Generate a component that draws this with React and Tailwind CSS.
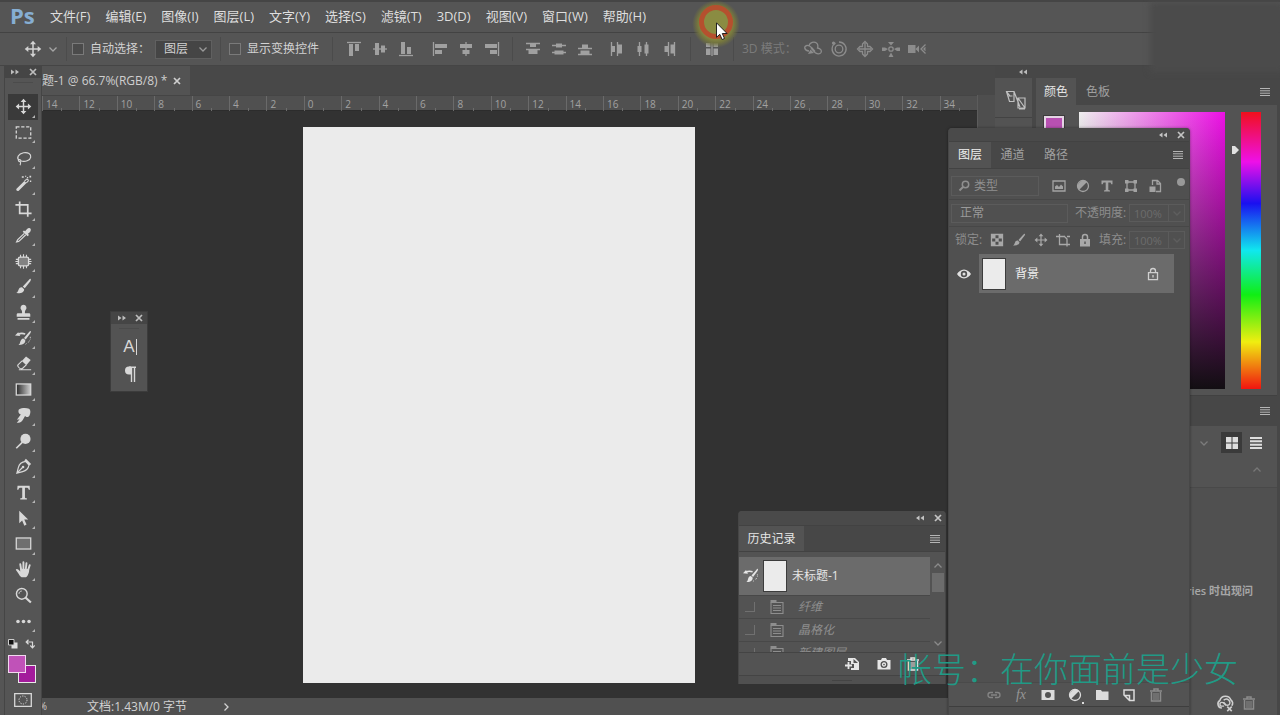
import React from "react";

function Icon({ className = "size-5", box = 20, children }) {
  return (
    <svg viewBox={`0 0 ${box} ${box}`} className={`${className} shrink-0`} fill="none" stroke="currentColor" strokeWidth="1.3" aria-hidden="true">
      {children}
    </svg>
  );
}

const solid = { fill: "currentColor", stroke: "none" };

const glyphs = {
  move: (
    <g>
      <path d="M10 3v14M3 10h14" strokeWidth="1.7" />
      <path {...solid} d="M10 .8l3.400 4H6.600zM10 19.200l3.400-4H6.600zM.8 10l4-3.400v6.800zM19.200 10l-4-3.400v6.800z" />
    </g>
  ),
  marquee: <rect x="1.500" y="3.500" width="17" height="13" strokeDasharray="3.800 2" strokeWidth="1.500" />,
  lasso: (
    <g>
      <path d="M5 12.300C1.200 9 4 4.500 10 3.200c5.500-.9 9 1.400 8.500 5.100-.7 4-6.500 6-11.500 4.600" strokeWidth="1.400" />
      <path d="M6.500 11.500c-1.600-.8-3 .4-2.400 1.500.6 1 2.600.7 2.700-.4.1-.8-.8-1-1.200-.6M6 13.500c1 1 .8 2.500 0 4.500" />
    </g>
  ),
  wand: (
    <g>
      <path {...solid} d="M1.800 16.200L11 7l2.500 2.500-9.100 8.900c-1.600 1.200-3.800-.7-2.600-2.200z" />
      <path d="M11.200 7.300l2.200-2.100c1-1 3 .9 2 1.900L13.300 9.200" />
      <path {...solid} d="M8 1.500h2.300v1.800H8zM14 2.300h1.500v1.500H14zM17 .8h2v2h-2zM17.500 6.500h1.600v1.600h-1.600zM11.800 .8h1.400v1.400h-1.400z" />
    </g>
  ),
  crop: <path d="M5.500 .5v14h9.500M.5 4.500h14.500v14M15 14.500H19.500" strokeWidth="2" />,
  dropper: (
    <g>
      <path d="M11 7.500L3.500 14.500c-.8.900-1 2-1.500 3 1.200-.2 2.700-.6 3.500-1.500L12.700 9.200" strokeWidth="1.500" />
      <path {...solid} d="M9 5.500l1.500-1.500 1.500 1c1-1.500 3-4 5-3.700 1.800.3 2.200 2.500 1.100 4-.7 1-1.800 1.900-2.900 2.700l1.200 1.400-1.500 1.500z" />
    </g>
  ),
  patch: (
    <g>
      <rect x="4" y="4.800" width="12" height="10.400" rx="2" fill="currentColor" fillOpacity=".35" strokeWidth="1.600" />
      <path d="M6.500 2V5M10 1.500v3.500M13.500 2V5M6.500 15v3M10 15v3.500M13.500 15v3M1 7.500H4M.5 10h3.500M1 12.500H4M16 7.500h3M16 10h3.500M16 12.500h3" strokeWidth="1.300" />
    </g>
  ),
  brush: (
    <g>
      <path {...solid} d="M18.500 1.200c.5.500.1 1.600-.7 2.900l-6.300 8-2.300-2.200 7.100-7.600c1-1 1.700-1.600 2.200-1.100z" />
      <path {...solid} d="M8.300 10.800l2.400 2.300c.2 3.300-3 5.200-9.400 4.600 1.900-1 2.300-2.600 3-4.300.7-1.900 2.300-2.900 4-2.600z" />
    </g>
  ),
  stamp: <path {...solid} d="M10 1a3.600 3.600 0 0 1 2.300 6.300c-.6.800-.7 1.900-.6 3.700H16.500c1 0 1.500.7 1.500 1.500V15H2v-2.500c0-.8.5-1.500 1.500-1.500h4.800c.1-1.800 0-2.900-.6-3.700A3.600 3.600 0 0 1 10 1zM3 16.500h14V18.500H3z" />,
  history: (
    <g>
      <path {...solid} d="M18.500 1.200c.5.500.1 1.600-.6 2.800l-5.300 7.200-2-1.800 6-7c.8-.9 1.500-1.600 1.900-1.200zM9.800 9.900l2.200 2c.6 3.600-2.500 6-7.900 5.600 1.700-.9 1.600-2.200 2.200-3.900.6-2.200 1.800-3.600 3.500-3.700zM0 6.500l3.800-4 2.400 4.700z" />
      <path d="M3.500 5.300c2.200-1.300 5.500-1.500 8.500-.6" strokeWidth="2" />
      <path d="M18 8v3M17 12.500l-1.500 2.500M13.500 16l-1.800 1.300" strokeDasharray="1.300 1" strokeWidth="1.100" />
    </g>
  ),
  eraser: (
    <g>
      <path {...solid} d="M8 7l5-5.200 5.500 4-5.200 6.200z" />
      <path d="M8.300 7L3.500 11.700c-1 1.300.5 2.700 1.800 3.700 1.400 1 2.700 1 3.700.2l4.300-4M4.500 17.300h14.500" strokeWidth="1.300" />
    </g>
  ),
  gradient: (
    <g>
      <defs>
        <linearGradient id="toolFade">
          <stop offset="0" stopColor="#2b2b2b" />
          <stop offset="1" stopColor="#d0d0d0" />
        </linearGradient>
      </defs>
      <rect x="1.500" y="3.500" width="17" height="13" fill="url(#toolFade)" strokeWidth="1.500" />
    </g>
  ),
  smudge: <path {...solid} d="M4.500 3c3.300-2.200 8.700-2.200 12-1 1.900 1 2 4.400.9 7-.6 2.200-2.400 3.300-4 2.700L11.800 10.500 9.300 15c-1.100 2.200-3.400 4.300-7.300 3.200 1.700-1.100 2.800-2.500 3.300-4.300l-2 1.300c-1.100-.7-.2-1.500.7-2.600L6.800 8.700C4.200 8.300 3.300 5.500 4.500 3z" />,
  dodge: (
    <g>
      <circle cx="12.300" cy="7" r="6" {...solid} />
      <path d="M8.500 11L1.500 18" strokeWidth="1.900" />
    </g>
  ),
  pen: (
    <g>
      <path d="M12.500 4C9 4.500 5 6.700 4 11L2.200 17.800 9 16c4.300-1 6.800-3.700 7.500-7.800zM2.800 17.200l6-6" strokeWidth="1.400" />
      <circle cx="9.500" cy="10.500" r="1.500" {...solid} />
      <path {...solid} d="M12.800 1l6.200 6.200-2 1.700-6-6z" />
    </g>
  ),
  type: <path {...solid} d="M3 2.200h14.200l.4 4.600h-1.400c-.4-1.900-1-2.500-2.700-2.500h-1.800v10.900c0 1.200.5 1.600 2.300 1.700v1.200H6.200v-1.200c1.800-.1 2.300-.5 2.300-1.700V4.300H6.700c-1.700 0-2.300.6-2.700 2.500H2.600z" />,
  pointer: <path {...solid} d="M5 1l10.500 10.300h-4.600l2.700 5.900-2.600 1.200-2.600-6L5 15.500z" />,
  shape: <rect x="1.500" y="3.500" width="17" height="13" fill="currentColor" fillOpacity=".2" strokeWidth="1.500" />,
  hand: (
    <g>
      <path d="M7.200 10L6.200 3.800M9.900 9V1.500M12.700 9.500l.8-7M15.300 11l2-6" strokeWidth="2.200" strokeLinecap="round" />
      <path {...solid} d="M6 9l10.500.5c.4 2.200 0 4.500-1 6-.8 1.900-1.700 3.500-2.800 3.500H7.700c-1.600-.7-3-3.400-4.300-5.300L.9 10.200c.6-1.500 2.300-1 3.300.2l2 2z" />
    </g>
  ),
  zoom: (
    <g>
      <circle cx="8" cy="8" r="6.300" strokeWidth="1.700" />
      <path d="M12.300 12.300l6.400 6" strokeWidth="2.600" />
      <path d="M4.700 8c0-1.800 1.500-3.300 3.300-3.300" strokeWidth="1.100" />
    </g>
  ),
  dots: (
    <g {...solid}>
      <circle cx="3.500" cy="10" r="2.100" />
      <circle cx="10" cy="10" r="2.100" />
      <circle cx="16.500" cy="10" r="2.100" />
    </g>
  ),
};

const tools = [
  ["move", "移动工具"], ["marquee", "矩形选框工具"], ["lasso", "套索工具"], ["wand", "魔棒工具"],
  ["crop", "裁剪工具"], ["dropper", "吸管工具"], ["patch", "修补工具"], ["brush", "画笔工具"],
  ["stamp", "仿制图章工具"], ["history", "历史记录画笔"], ["eraser", "橡皮擦工具"], ["gradient", "渐变工具"],
  ["smudge", "涂抹工具"], ["dodge", "减淡工具"], ["pen", "钢笔工具"], ["type", "文字工具"],
  ["pointer", "路径选择工具"], ["shape", "矩形工具"], ["hand", "抓手工具"], ["zoom", "缩放工具"], ["dots", "编辑工具栏"],
];

const menus = ["文件(F)", "编辑(E)", "图像(I)", "图层(L)", "文字(Y)", "选择(S)", "滤镜(T)", "3D(D)", "视图(V)", "窗口(W)", "帮助(H)"];

/* Align and distribute glyphs on a 16px grid */
const alignTop = <g><path d="M1 1.500h14" /><path {...solid} d="M3 3h4V15H3zM9 3h4V10H9z" /></g>;
const alignMid = <g><path d="M1 8h14" /><path {...solid} d="M3 2h4v12H3zM9 4.500h4v7H9z" /></g>;
const alignBottom = <g><path d="M1 14.500h14" /><path {...solid} d="M3 1h4v12H3zM9 6h4v7H9z" /></g>;
const turn = (node) => <g transform="matrix(0 1 1 0 0 0)">{node}</g>;
const distTop = <g><path d="M1 2.500h14M1 8.500h14" /><path {...solid} d="M5 2.500h6v3.500H5zM3.500 8.500h9V13h-9z" /></g>;
const distMid = <g><path d="M1 4.500h14M1 11.500h14" /><path {...solid} d="M5 2.500h6v4H5zM3.500 9.500h9v4h-9z" /></g>;
const distBottom = <g><path d="M1 7.500h14M1 13.500h14" /><path {...solid} d="M5 3.500h6v4H5zM3.500 9.500h9v4h-9z" /></g>;

const alignGroups = [
  ["mr-2", [["顶对齐", alignTop], ["垂直居中对齐", alignMid], ["底对齐", alignBottom]]],
  ["", [["左对齐", turn(alignTop)], ["水平居中对齐", turn(alignMid)], ["右对齐", turn(alignBottom)]]],
];
const distGroups = [
  ["mr-1.5", [["按顶分布", distTop], ["垂直居中分布", distMid], ["按底分布", distBottom]]],
  ["", [["按左分布", turn(distTop)], ["水平居中分布", turn(distMid)], ["按右分布", turn(distBottom)]]],
];

const modes3d = [
  ["旋转 3D 对象", <g><path d="M5 11C0 10.500-.5 6 3 5.500c2-.3 3.500 1 5 2.500l3 3.500M5 5.500C6 2.500 10 1 12.500 3c2 1.600 1.500 3.500 1 5 3 .5 4.500 2.500 3.500 4.500-1.200 2.200-4.500 1.500-6 0L7 8" /><path {...solid} d="M4 14l2.500-4.500L10 13z" /></g>],
  ["滚动 3D 对象", <g><path d="M5.500 3A7 7 0 1 0 9 2" /><circle cx="9" cy="9" r="3.800" /><circle cx="3.500" cy="3" r="1.600" {...solid} /></g>],
  ["拖动 3D 对象", <g><path d="M9 1.500L6.500 4v2.500H4L1.500 9 4 11.500h2.500V14L9 16.500l2.500-2.500v-2.500H14L16.500 9 14 6.500h-2.500V4zM9 3v12M3 9h12" /></g>],
  ["滑动 3D 对象", <g><path {...solid} d="M9 5.500L6 2h6zM0 7.500h3L6 9l-3 2H0zM18 7.500h-3L12 9l3 2h3zM6.500 17L9 12.500l2.500 4.500z" /><circle cx="9" cy="9" r="2.200" /></g>],
  ["缩放 3D 对象", <g><path {...solid} d="M0 5h7.500v8H0zM7.500 9L11 5.500v7z" /><path d="M17.500 4.500L13 9l4.500 4.500M17.500 7.500L16 9l1.500 1.500" /></g>],
];

function GlyphGroup({ className, items }) {
  return (
    <div className={`flex ${className}`}>
      {items.map(([label, node]) => (
        <button key={label} aria-label={label} className="flex w-[26px] justify-center">
          <Icon className="size-4" box={16}>{node}</Icon>
        </button>
      ))}
    </div>
  );
}

const Divider = ({ className = "" }) => <span className={`h-6 w-px bg-[#4b4b4b] ${className}`} />;

function Chevron({ className = "" }) {
  return (
    <svg viewBox="0 0 10 10" className={`size-2.5 shrink-0 ${className}`} fill="none" stroke="currentColor" strokeWidth="1.300" aria-hidden="true">
      <path d="M1.500 3.500L5 7l3.500-3.500" />
    </svg>
  );
}

function Collapse({ right }) {
  return (
    <button aria-label="折叠" className="flex items-center">
      <svg viewBox="0 0 8 6" className="h-1.5 w-2" fill="currentColor" aria-hidden="true">
        {right ? <path d="M0 0.500l3.500 2.500L0 5.500zM4.500.5L8 3 4.500 5.500z" /> : <path d="M3.500.5v5L0 3zM8 .5v5L4.500 3z" />}
      </svg>
    </button>
  );
}

function Close() {
  return (
    <button aria-label="关闭" className="flex items-center">
      <svg viewBox="0 0 8 8" className="size-2" fill="none" stroke="currentColor" strokeWidth="1.700" aria-hidden="true">
        <path d="M1 1l6 6M7 1L1 7" />
      </svg>
    </button>
  );
}

function PanelMenu() {
  return (
    <button aria-label="面板菜单" className="flex items-center">
      <svg viewBox="0 0 10 8" className="h-2 w-2.5" fill="none" stroke="#b5b5b5" aria-hidden="true">
        <path d="M0 .5h10M0 2.800h10M0 5.200h10M0 7.500h10" />
      </svg>
    </button>
  );
}

function MenuBar() {
  return (
    <nav className="flex h-[33px] shrink-0 items-center border-t-2 border-b border-t-[#454545] border-b-[#434343] pl-2.5">
      <span className="w-10 pb-1 text-[22px] leading-7 font-bold text-[#86aed3]">Ps</span>
      <div className="flex gap-[15px] text-[13px] text-[#dedede]">
        {menus.map((m) => <button key={m}>{m}</button>)}
      </div>
    </nav>
  );
}

function OptionsBar() {
  return (
    <div className="flex h-[33px] shrink-0 items-center border-b border-[#454545] pl-6 text-xs text-[#d2d2d2]">
      <Icon className="size-[18px]">{glyphs.move}</Icon>
      <Chevron className="ml-1.5 text-[#a5a5a5]" />
      <span className="ml-2 h-6 w-px bg-[#4c4c4c]" />
      <label className="ml-[5px] flex items-center gap-1.5">
        <input type="checkbox" className="size-3 appearance-none border border-[#7a7a7a] bg-[#4b4b4b]" />
        <span className="w-[65px]">自动选择：</span>
      </label>
      <div className="relative flex items-center">
        <select aria-label="自动选择对象" className="h-[19px] w-[57px] appearance-none border border-[#606060] bg-[#454545] pl-2 leading-4">
          <option>图层</option>
          <option>组</option>
        </select>
        <Chevron className="pointer-events-none absolute right-1 text-[#9a9a9a]" />
      </div>
      <Divider className="ml-2" />
      <label className="ml-2 flex items-center gap-1.5">
        <input type="checkbox" className="size-3 appearance-none border border-[#7a7a7a] bg-[#505050]" />
        <span className="w-[85px]">显示变换控件</span>
      </label>
      <Divider className="mr-2" />
      <div className="flex items-center text-[#a0a0a0]">
        {alignGroups.map(([c, items], i) => <GlyphGroup key={i} className={c} items={items} />)}
        <Divider className="mx-[7px]" />
        {distGroups.map(([c, items], i) => <GlyphGroup key={i} className={c} items={items} />)}
        <Divider className="mx-2" />
        <button aria-label="自动对齐图层" className="flex w-[26px] justify-center">
          <Icon className="size-4" box={16}>
            <path d="M8 1v14" /><path {...solid} d="M2 2h4.500v4H2zM2 7.500h4.500V14H2zM9.500 2H14v4H9.500zM9.500 7.500H14V14H9.500z" />
          </Icon>
        </button>
        <Divider className="mx-2" />
      </div>
      <span className="w-[58px] text-[#7b7b7b]">3D 模式：</span>
      <div className="flex text-[#8c8c8c]">
        {modes3d.map(([label, node]) => (
          <button key={label} aria-label={label} className="flex w-[26px] justify-center">
            <Icon className="size-[18px]" box={18}>{node}</Icon>
          </button>
        ))}
      </div>
    </div>
  );
}

function Toolbar() {
  return (
    <aside className="flex w-[38px] shrink-0 flex-col border-x border-[#454545] text-[#d8d8d8]">
      <div className="flex h-3 shrink-0 items-center justify-between bg-[#454545] pr-1 pl-1.5 text-[#bdbdbd]">
        <Collapse right />
        <Close />
      </div>
      <div className="mx-2 mt-1 mb-[11px] h-px bg-[#4b4b4b]" />
      <div className="grid flex-1 auto-rows-fr">
        {tools.map(([id, label]) => (
          <button
            key={id}
            aria-label={label}
            className={`relative mx-[3px] flex items-center justify-center ${id === "move" ? "bg-[#3a3a3a]" : ""}`}
          >
            <Icon className="size-[17px]">{glyphs[id]}</Icon>
            {id !== "zoom" && (
              <svg viewBox="0 0 4 4" className="absolute right-[3px] bottom-0.5 size-[3px]" fill="#b5b5b5" aria-hidden="true"><path d="M4 0v4H0z" /></svg>
            )}
          </button>
        ))}
      </div>
      <div className="mt-1 mb-[5px] flex h-3 items-center justify-between pr-1.5 pl-[3px]">
        <button aria-label="默认颜色">
          <svg viewBox="0 0 10 10" className="size-2.5"><path fill="#e0e0e0" d="M3.500 3.500h6v6h-6z" /><path fill="#111" stroke="#ccc" d="M.5.5h5.500V6H.5z" /></svg>
        </button>
        <button aria-label="切换颜色">
          <svg viewBox="0 0 10 10" className="size-2.5" fill="none" stroke="currentColor" strokeWidth="1.200"><path d="M1.500 3H7.500v5.500M3.500.8L1.200 3l2.300 2.200M5.300 6.500l2.200 2.300 2.200-2.300" /></svg>
        </button>
      </div>
      <div className="ml-[3px] grid w-7 grid-cols-[10px_8px_10px] grid-rows-[10px_8px_10px]">
        <button aria-label="背景色" className="col-span-2 col-start-2 row-span-2 row-start-2 border border-[#e8e8e8] bg-[#a31b9c]" />
        <button aria-label="前景色" className="col-span-2 col-start-1 row-span-2 row-start-1 border border-[#f2d8f0] bg-[#c052b8]" />
      </div>
      <button aria-label="快速蒙版" className="mt-2.5 mb-2 flex justify-center">
        <svg viewBox="0 0 18 14" className="h-3.5 w-[18px]" fill="none" stroke="currentColor"><path d="M.7.7h16.600v12.600H.7z" strokeWidth="1.300" /><circle cx="9" cy="7" r="4" strokeDasharray="1.300 1.200" /></svg>
      </button>
    </aside>
  );
}

const rulerMarks = Array.from({ length: 25 }, (_, i) => Math.abs(i * 2 - 14));

function Document() {
  return (
    <main className="flex min-w-0 flex-1 flex-col">
      <div className="flex h-[29px] shrink-0 bg-[#484848]">
        <div className="flex items-center gap-1.5 bg-[#535353] pr-[9px] text-xs text-[#cfcfcf]">
          <span>题-1 @ 66.7%(RGB/8) *</span>
          <Close />
        </div>
      </div>
      <div className="flex min-h-0 flex-1">
        <div className="flex min-w-0 flex-1 flex-col">
          <div className="grid h-4 shrink-0 grid-cols-[repeat(25,minmax(0,1fr))] border-t border-b border-t-[#454545] border-b-[#2c2c2c] bg-[#505050]">
            {rulerMarks.map((n, i) => (
              <div key={i} className="flex justify-between border-l border-[#6a6a6a]">
                <span className="w-[18px] pl-[3px] text-[10px] leading-[16px] text-[#a2a2a2]">{n}</span>
                <span className="mr-[17px] h-1 w-px self-end bg-[#6c6c6c]" />
              </div>
            ))}
          </div>
          <div className="flex flex-1 bg-[#323232] pt-4 pr-[282px] pb-[15px] pl-[261px]">
            <div className="flex-1 bg-[#ebebeb]" />
          </div>
        </div>
        <div className="w-[18px] shrink-0 border-l border-[#5c5c5c] bg-[#4e4e4e]" />
      </div>
      <footer className="flex h-[17px] shrink-0 items-center bg-[#505050] text-xs text-[#d2d2d2]">
        <span className="mr-10 flex w-[5px] justify-end overflow-hidden text-[10px]">%</span>
        <span className="w-[134px] leading-4">文档:1.43M/0 字节</span>
        <button aria-label="状态信息" className="flex"><Chevron className="-rotate-90" /></button>
      </footer>
    </main>
  );
}

function ColorDock() {
  return (
    <aside className="flex w-[285px] shrink-0 flex-col bg-[#474747]">
      <div className="flex h-3 shrink-0 items-center pl-6 text-[#bdbdbd]"><Collapse /></div>
      <div className="flex min-h-0 flex-1 gap-1 pr-[3px]">
        <div className="w-[37px] shrink-0 bg-[#535353]">
          <button aria-label="历史源" className="flex h-10 w-full items-center justify-center border-b border-[#434343] pl-1 text-[#c0c0c0]">
            <Icon className="mt-1 size-[22px]" box={22}>
              <path d="M1.500 2.500h7.500v10H4.500zM1.500 2.500l4 5M3 7h4.500M9 2.500L15 18M13 9h7v10h-7zM13 9l7 10M20 20h-6" strokeWidth="1.200" />
            </Icon>
          </button>
        </div>
        <div className="flex min-w-0 flex-1 flex-col bg-[#535353]">
          <div className="flex h-[27px] shrink-0 items-center justify-between bg-[#474747] pr-[7px] text-xs text-[#a0a0a0]">
            <div className="flex h-full">
              <button className="w-10 bg-[#535353] text-[#e6e6e6]">颜色</button>
              <button className="w-[44px]">色板</button>
            </div>
            <PanelMenu />
          </div>
          <div className="flex h-[291px] shrink-0 border-b border-[#414141] pt-[7px] pr-4 pb-[6px] pl-2">
            <div className="w-[35px] shrink-0">
              <button aria-label="前景色" className="mt-1 block size-5 border-2 border-[#e4d4e4] bg-[#b850b2] outline outline-[#3c3c3c]" />
            </div>
            <div className="flex-1 bg-[linear-gradient(to_bottom,transparent,#120e12),linear-gradient(to_right,#efefef,#ec10e4)]" />
            <div className="flex w-4 justify-end pt-[34px] pr-0.5">
              <svg viewBox="0 0 7 8" className="h-2 w-[7px]" fill="#e2e2e2" aria-hidden="true"><path d="M0 0h3l4 4-4 4H0z" /></svg>
            </div>
            <div className="w-5 bg-[linear-gradient(to_bottom,#f0101c,#ee10e8_18%,#1a10f0_33%,#10e8ee_50%,#10ee14_66%,#f0ee10_83%,#f01410)]" />
          </div>
          <div className="flex h-[30px] shrink-0 items-center justify-end bg-[#474747] pr-[7px]"><PanelMenu /></div>
          <div className="flex h-[62px] shrink-0 flex-col items-end border-b border-[#494949] pt-1.5 pr-[15px]">
            <div className="flex items-center text-[#dedede]">
              <Chevron className="mr-3 text-[#7c7c7c]" />
              <button aria-label="缩览图" className="flex size-[21px] items-center justify-center bg-[#3a3a3a]">
                <svg viewBox="0 0 12 12" className="size-3" fill="currentColor"><path d="M0 0h5.500v5.500H0zM6.500 0H12v5.500H6.500zM0 6.500h5.500V12H0zM6.500 6.500H12V12H6.500z" /></svg>
              </button>
              <button aria-label="列表" className="ml-2 flex">
                <svg viewBox="0 0 12 12" className="size-3" fill="none" stroke="currentColor" strokeWidth="2"><path d="M0 1h12M0 4.300h12M0 7.700h12M0 11h12" /></svg>
              </button>
            </div>
            <Chevron className="mt-3 rotate-180 text-[#777777]" />
          </div>
          <div className="flex flex-1 items-center justify-end bg-[#505050] pt-1 pr-6 text-[11px] font-semibold text-[#a6a6a6]">
            <p className="whitespace-nowrap">加载 Libraries 时出现问</p>
          </div>
          <div className="flex h-[25px] shrink-0 items-center justify-end gap-2 pr-[21px]">
            <button aria-label="云同步" className="text-[#cfcfcf]">
              <Icon className="size-[18px]">
                <path d="M6.500 15.500A4.500 4.500 0 0 1 4.300 7.200 6.500 6.500 0 0 1 16.600 6.700 4.300 4.300 0 0 1 17.500 13" strokeWidth="1.800" />
                <path d="M9 13.500H6.500a2 2 0 0 1 0-4.200c1.300 0 1.900.6 2.700 1.400l2 2M8.500 7c1.500-1.500 4-1.700 5.700-.2 1.600 1.600 1.700 4 .2 5.200-1.300 1-2.700.6-3.700-.4L8.500 9.200" strokeWidth="1.600" />
                <path d="M12.500 14l5 5M17.500 14l-5 5" strokeWidth="1.800" />
              </Icon>
            </button>
            <button aria-label="删除" className="text-[#8c8c8c]"><Icon className="size-3.5" box={14}>{trash}</Icon></button>
          </div>
        </div>
      </div>
    </aside>
  );
}

const trash = <g><path d="M1 3h12M5 2.800V1h4v1.800M2.500 4v9h9V4" strokeWidth="1.500" /><path d="M5 5v7M7 5v7M9 5v7" strokeWidth="1" /></g>;
const halfCircle = <g><circle cx="7" cy="7" r="5.500" /><path {...solid} d="M11 3A5.700 5.700 0 0 0 3 11z" /></g>;
const padlock = <g><path d="M4.500 6V4a2.500 2.500 0 0 1 5 0v2" strokeWidth="1.500" /><path {...solid} fillRule="evenodd" d="M2 6h10v7.500H2zM6.300 8.500v2.500h1.400V8.500z" /></g>;

const filters = [
  ["像素", <g><path d="M1 2h12v10H1z" /><path {...solid} d="M3 10V7.500L5 6l2 2 2-2.500 2 2V10z" /></g>],
  ["调整", halfCircle],
  ["文字", <path {...solid} d="M1.500 1.500h11v3.800h-1.200l-.8-1.800H8.300v7.500l1.700.5V12.500H4V11.500l1.700-.5V3.500H3.500l-.8 1.800H1.500z" />],
  ["形状", <g><path d="M3 3h8v8H3z" /><path {...solid} d="M1 1h3.500v3.500H1zM9.500 1H13v3.500H9.500zM1 9.500h3.500V13H1zM9.500 9.500H13V13H9.500z" /></g>],
  ["智能对象", <g><path d="M4.500 6V1.500h5l3 3v8H8M9 1.500V5h3.500" /><path {...solid} d="M1.500 7.500h6V13h-6z" /></g>],
];

const locks = [
  ["锁定透明像素", <g><path d="M1.500 1.500h11v11h-11z" /><path {...solid} d="M2 2h3.500v3.500H2zM8.500 2H12v3.500H8.500zM5.300 5.300h3.400v3.400H5.300zM2 8.500h3.500V12H2zM8.500 8.500H12V12H8.500z" /></g>],
  ["锁定图像像素", <g transform="scale(.7)">{glyphs.brush}</g>],
  ["锁定位置", <g transform="scale(.7)">{glyphs.move}</g>],
  ["锁定画板", <path d="M3.500 1v10.500H14M0 3.500h9M11 13.500V6L8 3M11 3.500h3" />],
  ["锁定全部", padlock],
];

const layerActions = [
  ["链接图层", "text-[#858585]", <g><path d="M6 4.500H3.500a2.500 2.500 0 0 0 0 5H6M8 4.500h2.500a2.500 2.500 0 0 1 0 5H8M4 7h6" /></g>],
  ["图层样式", "text-[#969696]", null],
  ["添加蒙版", "text-[#dcdcdc]", <path {...solid} fillRule="evenodd" d="M.5 2h13v10H.5zM7 4a3 3 0 1 0 0 6 3 3 0 0 0 0-6z" />],
  ["调整图层", "text-[#dcdcdc]", <g>{halfCircle}<path {...solid} d="M14 14h2v2h-2z" /></g>],
  ["新建组", "text-[#dcdcdc]", <path {...solid} d="M1 2h5l1 1.500h6.500V12H1z" />],
  ["新建图层", "text-[#dcdcdc]", <path d="M2 2h10v10.500H7.500L2 7zM2.500 7.500h5v5" strokeWidth="1.500" />],
  ["删除图层", "text-[#8c8c8c]", trash],
];

function ValueField({ label, width }) {
  return (
    <label className="flex items-center text-[#8d8d8d]">
      <span className={width}>{label}</span>
      <input defaultValue="100%" className="h-[18px] w-10 border border-[#5b5b5b] bg-transparent pl-1 text-[11px] text-[#6c6c6c]" />
      <span className="flex h-[18px] w-4 items-center justify-center border border-l-0 border-[#5b5b5b]"><Chevron className="text-[#5e5e5e]" /></span>
    </label>
  );
}

function LayersPanel() {
  return (
    <section className="absolute top-[128px] right-[90px] bottom-0 flex w-[242px] flex-col rounded-t-sm border-x border-[#474747] bg-[#505050] text-xs shadow-[0_0_3px_#0006]">
      <div className="flex h-[13px] shrink-0 items-center justify-end gap-2.5 rounded-t-sm bg-[#4a4a4a] pr-1 text-[#c4c4c4]">
        <Collapse />
        <Close />
      </div>
      <div className="flex h-7 shrink-0 items-center justify-between border-y border-[#424242] bg-[#474747] pr-1.5 text-[#a0a0a0]">
        <div className="flex h-full">
          <button className="w-[42px] bg-[#535353] text-[#f0f0f0]">图层</button>
          <button className="w-[43px]">通道</button>
          <button className="w-[44px]">路径</button>
        </div>
        <PanelMenu />
      </div>
      <div className="flex h-[31px] shrink-0 items-center border-b border-[#474747] pt-1 pl-0.5 text-[#8f8f8f]">
        <div className="flex h-5 w-[88px] items-center border border-[#5b5b5b] pl-1.5">
          <Icon className="size-3" box={12}><circle cx="7.500" cy="4.500" r="3.200" strokeWidth="1.500" /><path d="M5 7L1.500 10.500" strokeWidth="2" /></Icon>
          <span className="ml-1">类型</span>
        </div>
        <div className="ml-2 flex">
          {filters.map(([label, node]) => (
            <button key={label} aria-label={label} className="flex w-6 justify-center text-[#a2a2a2]"><Icon className="size-3.5" box={14}>{node}</Icon></button>
          ))}
        </div>
        <button aria-label="打开过滤" className="mb-2 ml-2.5 size-2 rounded-full bg-[#999999]" />
      </div>
      <div className="flex h-[27px] shrink-0 items-center justify-between border-b border-[#474747] pr-1 pl-0.5">
        <select aria-label="混合模式" className="h-[19px] w-[117px] appearance-none border border-[#5b5b5b] bg-transparent pl-2 leading-4 text-[#9a9a9a]">
          <option>正常</option>
        </select>
        <ValueField label="不透明度:" width="w-[54px]" />
      </div>
      <div className="flex h-[26px] shrink-0 items-center pr-1 pl-1.5 text-[#8d8d8d]">
        <span className="w-[31px]">锁定:</span>
        <div className="flex text-[#a8a8a8]">
          {locks.map(([label, node]) => (
            <button key={label} aria-label={label} className="flex w-[22px] justify-center"><Icon className="size-3.5" box={14}>{node}</Icon></button>
          ))}
        </div>
        <div className="ml-auto"><ValueField label="填充:" width="w-[30px]" /></div>
      </div>
      <div className="mt-px flex h-[39px] shrink-0 items-center pr-[15px]">
        <button aria-label="显示图层" className="flex w-[30px] justify-center text-[#e0e0e0]">
          <Icon className="size-3.5" box={14}><path {...solid} fillRule="evenodd" d="M7 2.500C10 2.500 12.500 4.800 14 7c-1.500 2.200-4 4.500-7 4.500S1.500 9.200 0 7c1.500-2.200 4-4.500 7-4.500zM7 3.800a3.200 3.200 0 1 0 0 6.400 3.200 3.200 0 0 0 0-6.400zM7 5.500a1.500 1.500 0 1 1 0 3 1.500 1.500 0 0 1 0-3z" /></Icon>
        </button>
        <div className="flex h-full flex-1 items-center bg-[#6b6b6b] pr-3.5 pl-[3px] text-[#f0f0f0]">
          <span className="h-8 w-6 border border-[#3c3c3c] bg-[#ebebeb]" />
          <span className="ml-[9px] flex-1">背景</span>
          <Icon className="size-3.5 text-[#d0d0d0]" box={14}><path d="M4.500 5.500V4a2.500 2.500 0 0 1 5 0v1.500M2.500 5.700h9v7h-9zM7 8v2.500" /></Icon>
        </div>
      </div>
      <div className="flex-1" />
      <div className="mb-2 flex h-[25px] shrink-0 items-center justify-center gap-[3px] border-y border-t-[#4a4a4a] border-b-[#3e3e3e] bg-[#535353] pl-3">
        {layerActions.map(([label, tone, node]) => (
          <button key={label} aria-label={label} className={`flex w-6 justify-center ${tone}`}>
            {node ? <Icon className="size-3.5 overflow-visible" box={14}>{node}</Icon> : <i className="font-['Liberation_Serif',serif] text-sm leading-4">fx</i>}
          </button>
        ))}
      </div>
    </section>
  );
}

function HistoryPanel() {
  return (
    <section className="absolute right-[334px] bottom-[31px] flex h-[173px] w-52 flex-col rounded-t-sm border-x border-[#464646] bg-[#535353] text-xs text-[#e6e6e6]">
      <div className="flex h-3.5 shrink-0 items-center justify-end gap-2.5 rounded-t-sm bg-[#4a4a4a] pr-[3px] text-[#c4c4c4]">
        <Collapse />
        <Close />
      </div>
      <div className="flex h-[27px] shrink-0 items-center justify-between border-y border-[#424242] bg-[#474747] pr-[5px]">
        <button className="h-full w-[65px] bg-[#535353]">历史记录</button>
        <PanelMenu />
      </div>
      <div className="mt-[5px] flex min-h-0 flex-1">
        <ul className="min-w-0 flex-1 overflow-hidden">
          <li className="flex h-[38px] items-center bg-[#6b6b6b] pl-1">
            <Icon className="size-4">{glyphs.history}</Icon>
            <span className="ml-1 h-8 w-6 border border-[#3c3c3c] bg-[#ebebeb]" />
            <span className="ml-[5px]">未标题-1</span>
          </li>
          {["纤维", "晶格化", "新建图层"].map((step) => (
            <li key={step} className="flex h-[23px] items-center border-t border-[#484848] pl-1.5 text-[#8e8e8e] italic">
              <span className="size-2.5 border-r border-b border-[#707070]" />
              <Icon className="ml-[15px] size-3.5" box={14}><path {...solid} d="M.5 0h6v2.500h-6z" /><path d="M1 2.500h12v11H1zM3 5.500h8M3 8h8M3 10.500h8" strokeWidth="1.100" /></Icon>
              <span className="ml-3.5">{step}</span>
            </li>
          ))}
        </ul>
        <div className="flex w-[15px] shrink-0 flex-col items-center py-1 text-[#8a8a8a]">
          <Chevron className="rotate-180" />
          <div className="mt-0.5 h-[19px] w-3 bg-[#6c6c6c]" />
          <Chevron className="mt-auto" />
        </div>
      </div>
      <div className="flex h-6 shrink-0 items-center border-y border-[#444444] pl-[105px]">
        <button aria-label="从当前状态创建新文档" className="flex w-[32px]">
          <Icon className="size-4" box={16}><path {...solid} fillRule="evenodd" d="M4 2h7l4 4v8H7v-2h3V8H7V5H4zM9.500 3v4H14z" /><path d="M1 9.500h7M4.500 6v7" strokeWidth="1.800" /></Icon>
        </button>
        <button aria-label="创建新快照" className="flex w-[30px]">
          <Icon className="size-4" box={16}><path {...solid} fillRule="evenodd" d="M1.500 4H5l1-2h4l1 2h3.500v9.500h-13zM8 5a3.500 3.500 0 1 0 0 7 3.500 3.500 0 0 0 0-7z" /><circle cx="8" cy="8.500" r="1.500" /></Icon>
        </button>
        <button aria-label="删除状态"><Icon className="size-3.5" box={14}>{trash}</Icon></button>
      </div>
      <div className="flex h-[8px] shrink-0 items-center justify-center bg-[#505050]"><span className="h-px w-5 bg-[#444444]" /></div>
    </section>
  );
}

function TextPanel() {
  return (
    <section className="absolute top-[311px] left-[110px] w-[38px] border border-[#3c3c3c] bg-[#535353] text-[#d8d8d8]">
      <div className="flex h-3 items-center justify-between bg-[#454545] pr-1 pl-[7px] text-[#bdbdbd]">
        <Collapse right />
        <Close />
      </div>
      <div className="mx-2 mt-1 h-px bg-[#4b4b4b]" />
      <button aria-label="字符" className="mt-1 flex h-[27px] w-full items-center justify-center gap-px pl-0.5">
        <span className="font-['Liberation_Sans',sans-serif] text-[17px]">A</span>
        <span className="h-4 w-px bg-current" />
      </button>
      <button aria-label="段落" className="flex h-[31px] w-full justify-center pt-1.5 pl-0.5">
        <svg viewBox="0 0 14 16" className="h-4 w-3.5" fill="none" stroke="currentColor" strokeWidth="1.400"><path {...solid} d="M8 .5v8H6a4 4 0 0 1 0-8z" /><path d="M6 1.200h7M8.500 1v15M11.500 1v15" /></svg>
      </button>
    </section>
  );
}

export default function App() {
  return (
    <div className="relative flex h-screen w-full flex-col overflow-hidden bg-[#555555] font-['Open_Sans','Noto_Sans_CJK_SC',sans-serif] select-none">
      <MenuBar />
      <OptionsBar />
      <div className="flex min-h-0 flex-1 pl-1">
        <Toolbar />
        <Document />
        <ColorDock />
      </div>
      <TextPanel />
      <HistoryPanel />
      <LayersPanel />
      <div className="absolute top-0.5 -right-1 h-[70px] w-[134px] bg-[#4b4b4b] blur-[3px]" />
      <div className="absolute top-0 left-[692px] size-12 rounded-full bg-[radial-gradient(circle,#8a8c42_0%,#8a8c42_42%,#73743f_55%,transparent_70%)]" />
      <div className="absolute top-[5px] left-[699px] size-[34px] rounded-full border-[5px] border-[#b5502e]" />
      <svg viewBox="0 0 12 18" className="absolute top-[22px] left-[716px] h-[18px] w-3" fill="#fff" stroke="#222" strokeWidth="1" aria-hidden="true">
        <path d="M.5.8v14.500l3.300-3 2.300 5.200 2.400-1-2.200-5h4.800z" />
      </svg>
      <p className="absolute right-[42px] bottom-[31px] font-['Noto_Sans_CJK_SC',sans-serif] text-[34px] leading-8 font-light whitespace-nowrap text-[#219a86]">帐号：在你面前是少女</p>
    </div>
  );
}
